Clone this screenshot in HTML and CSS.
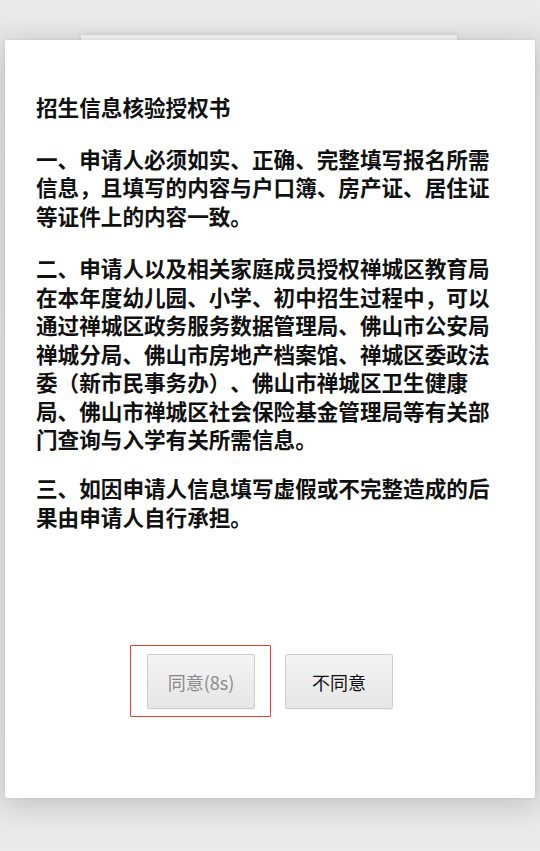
FILE: index.html
```html
<!DOCTYPE html>
<html lang="zh-CN">
<head>
<meta charset="utf-8">
<title>招生信息核验授权书</title>
<link rel="stylesheet" href="styles.css">
</head>
<body>
<div class="stage">
  <div class="back-card"></div>
  <div class="card">
    <div class="doc">
      <h1 class="doc-title">招生信息核验授权书</h1>
      <p class="doc-para">一、申请人必须如实、正确、完整填写报名所需信息，且填写的内容与户口簿、房产证、居住证等证件上的内容一致。</p>
      <p class="doc-para">二、申请人以及相关家庭成员授权禅城区教育局在本年度幼儿园、小学、初中招生过程中，可以通过禅城区政务服务数据管理局、佛山市公安局禅城分局、佛山市房地产档案馆、禅城区委政法委（新市民事务办）、佛山市禅城区卫生健康局、佛山市禅城区社会保险基金管理局等有关部门查询与入学有关所需信息。</p>
      <p class="doc-para doc-para-last">三、如因申请人信息填写虚假或不完整造成的后果由申请人自行承担。</p>
    </div>
    <div class="actions">
      <button class="btn btn-disabled btn-marked" type="button">同意(8s)</button>
      <button class="btn" type="button">不同意</button>
    </div>
  </div>
</div>
</body>
</html>
```

FILE: styles.css
```css
html, body {
  margin: 0;
  padding: 0;
}
body {
  width: 540px;
  height: 851px;
  overflow: hidden;
  background: linear-gradient(#ececec, #e3e3e3 5%, #e6e6e6 95%, #ececec);
  font-family: "Noto Sans CJK SC", "Noto Sans", sans-serif;
}
.stage {
  position: relative;
  padding: 40px 5px 0;
}
.back-card {
  position: absolute;
  left: 81px;
  top: 35px;
  width: 376px;
  height: 30px;
  background: #f3f3f3;
  box-shadow: 0 0 6px rgba(0, 0, 0, 0.12);
}
.card {
  position: relative;
  height: 758px;
  box-sizing: border-box;
  background: #fff;
  padding: 53px 31px 89px 31px;
  display: flex;
  flex-direction: column;
  box-shadow: 0 6px 28px rgba(0, 0, 0, 0.16), 0 0 3px rgba(0, 0, 0, 0.08);
  border-radius: 2px;
}
.doc {
  text-spacing-trim: space-all;
}
.doc-title,
.doc-para {
  margin: 0 0 24px;
  font-size: 21.6px;
  line-height: 28.5px;
  font-weight: 700;
  color: #111;
  text-spacing-trim: space-all;
}
.doc-title {
  margin-bottom: 23px;
}
.doc-para:nth-of-type(2) {
  margin-bottom: 20.5px;
}
.actions {
  margin-top: auto;
  display: flex;
  justify-content: center;
  gap: 30px;
}
.btn {
  position: relative;
  width: 108px;
  height: 55px;
  box-sizing: border-box;
  border: 1px solid #cdcdcd;
  border-radius: 2px;
  background: linear-gradient(#f4f4f4, #e6e6e6);
  font-family: "Noto Sans CJK SC", "Noto Sans", sans-serif;
  font-size: 18px;
  color: #111;
  padding: 0;
  box-shadow: 0 1px 1px rgba(0, 0, 0, 0.06);
}
.btn-disabled {
  color: #8a8a8a;
}
.btn-marked::after {
  content: "";
  position: absolute;
  left: -18px;
  right: -17px;
  top: -10px;
  bottom: -9px;
  border: 1.5px solid #f03a2e;
  border-radius: 1px;
}
```
